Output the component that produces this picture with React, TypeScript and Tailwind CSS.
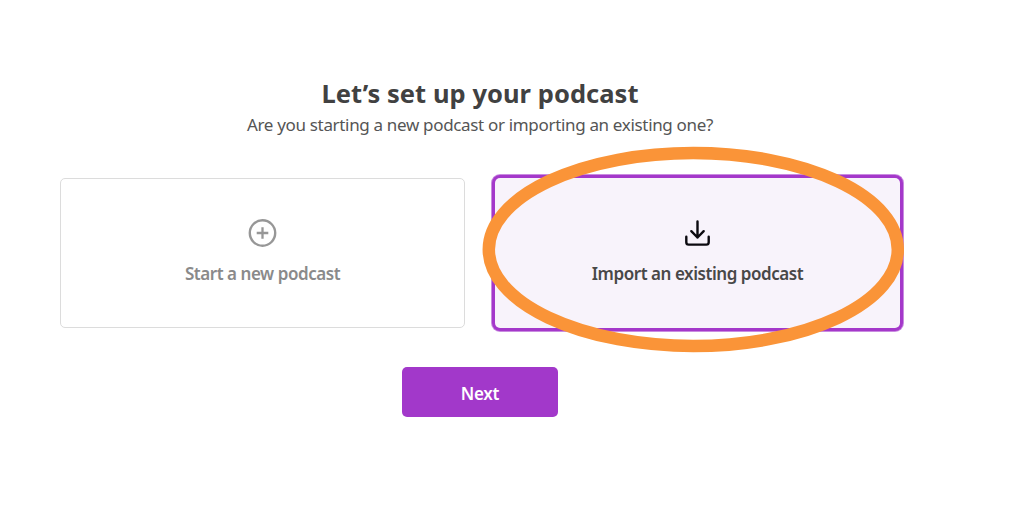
import React from "react";

const PlusIcon = () => (
  <svg width="30" height="30" viewBox="0.5 0 30 30" fill="none" stroke="#979797">
    <circle cx="15" cy="15" r="12.7" strokeWidth="2.4" />
    <path d="M15 9.2V20.8M9.2 15H20.8" strokeWidth="2.3" />
  </svg>
);

const ImportIcon = () => (
  <svg
    width="30"
    height="30"
    viewBox="0.5 0 30 30"
    fill="none"
    stroke="#0c0a10"
    strokeWidth="2.4"
    strokeLinecap="round"
    strokeLinejoin="round"
  >
    <path d="M15 3.5V19.5M8.8 13.2L15 19.5L21.2 13.2" />
    <path d="M3.8 18.7V24.2A2.4 2.4 0 0 0 6.2 26.6H23.8A2.4 2.4 0 0 0 26.2 24.2V18.7" />
  </svg>
);

const options = [
  { name: "Start a new podcast", icon: <PlusIcon /> },
  { name: "Import an existing podcast", icon: <ImportIcon /> },
];

const App = () => {
  const [selected, setSelected] = React.useState<number>(1);

  return (
    <div className="relative h-[525px] w-[1017px] overflow-hidden bg-white pl-[60px] pt-[76px] font-['Noto_Sans','Open_Sans',sans-serif]">
      <div className="flex w-[840px] flex-col items-center">
        <h1 className="whitespace-nowrap text-[25.5px] font-bold leading-[34px] tracking-[0.05px] text-[#414141]">
          Let’s set up your podcast
        </h1>
        <p className="mt-[3px] whitespace-nowrap text-[17px] leading-6 tracking-[-0.33px] text-[#555]">
          Are you starting a new podcast or importing an existing one?
        </p>

        <div className="mt-[41px] flex w-full gap-[30px]">
          {options.map((item, i) => (
            <button
              key={i}
              className={`flex h-[150px] w-[405px] flex-col items-center rounded-[5px] ${
                selected === i
                  ? "bg-[#f8f3fb] pt-10 text-[#484848] shadow-[0_0_0_3px_#a438ca,0_0_0_4px_#c98be0]"
                  : "border border-[#dcdcdc] bg-white pt-[39px] text-[#8a8a8a]"
              }`}
              onClick={() => setSelected(i)}
            >
              {item.icon}
              <span className="mt-[14px] whitespace-nowrap text-[17px] font-semibold leading-6 tracking-[-0.45px]">
                {item.name}
              </span>
            </button>
          ))}
        </div>

        <button className="mt-[39px] h-[50px] w-[156px] rounded-[5px] bg-[#a238ca] pt-[3px] text-[17px] font-semibold tracking-[-0.3px] text-white">
          Next
        </button>
      </div>

      <svg
        className="pointer-events-none absolute left-[482px] top-[146px]"
        width="424"
        height="208"
        fill="none"
      >
        <ellipse cx="211.3" cy="103.5" rx="204.5" ry="96.5" stroke="#fa9438" strokeWidth="12.5" />
      </svg>
    </div>
  );
};

export default App;
